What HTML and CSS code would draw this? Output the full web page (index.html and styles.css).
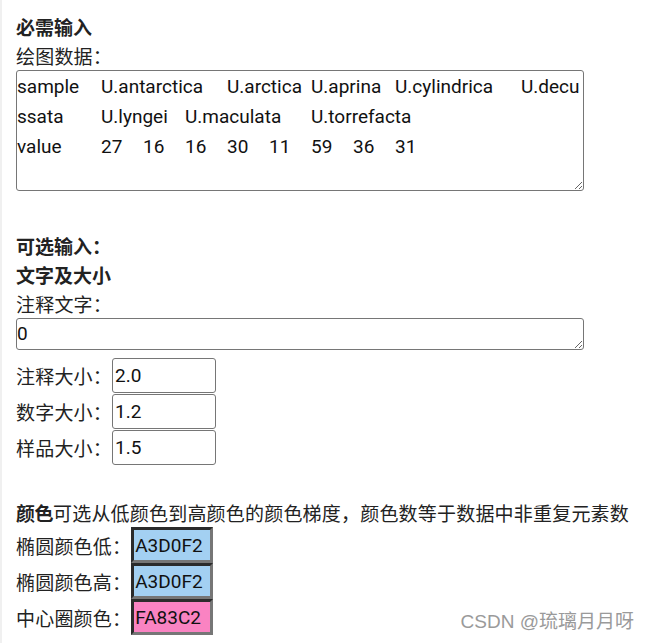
FILE: index.html
```html
<!DOCTYPE html>
<html lang="zh">
<head>
<meta charset="utf-8">
<title>绘图参数</title>
<link rel="stylesheet" href="styles.css">
</head>
<body>
<div class="page">
  <section class="block">
    <div class="title">必需输入</div>
    <div class="line">绘图数据：</div>
    <textarea class="data" spellcheck="false">sample	U.antarctica	U.arctica	U.aprina	U.cylindrica	U.decussata	U.lyngei	U.maculata	U.torrefacta
value	27	16	16	30	11	59	36	31</textarea>
  </section>

  <section class="block optional">
    <div class="title">可选输入：</div>
    <div class="title">文字及大小</div>
    <div class="line">注释文字：</div>
    <textarea class="note" spellcheck="false">0</textarea>
    <div class="rows">
      <div class="row"><span class="lab">注释大小：</span><input class="num" type="text" value="2.0"></div>
      <div class="row"><span class="lab">数字大小：</span><input class="num" type="text" value="1.2"></div>
      <div class="row"><span class="lab">样品大小：</span><input class="num" type="text" value="1.5"></div>
    </div>
  </section>

  <section class="block colors">
    <div class="line"><b class="strong">颜色</b>可选从低颜色到高颜色的颜色梯度，颜色数等于数据中非重复元素数</div>
    <div class="row crow"><span class="lab">椭圆颜色低：</span><input class="color blue" type="text" value="A3D0F2"></div>
    <div class="row crow"><span class="lab">椭圆颜色高：</span><input class="color blue" type="text" value="A3D0F2"></div>
    <div class="row crow"><span class="lab">中心圈颜色：</span><input class="color pink" type="text" value="FA83C2"></div>
  </section>

  <div class="watermark">CSDN @琉璃月月呀</div>
</div>
</body>
</html>
```

FILE: styles.css
```css
html, body {
  margin: 0;
  padding: 0;
  background: #ffffff;
}

body {
  font-family: Roboto, "Noto Sans CJK SC", sans-serif;
  font-size: 19px;
  color: #222222;
}

.page {
  position: relative;
  height: 643px;
  box-sizing: border-box;
  border-left: 2px solid #f0f0f0;
  padding: 12px 0 0 14px;
  overflow: hidden;
}

.title {
  font-family: "Noto Sans CJK SC", sans-serif;
  font-weight: 700;
  line-height: 29px;
  height: 29px;
}

.line {
  font-family: "Noto Sans CJK SC", sans-serif;
  line-height: 29px;
  height: 29px;
  white-space: nowrap;
  letter-spacing: 0.2px;
}

.strong {
  font-weight: 700;
  letter-spacing: -0.5px;
}

textarea {
  display: block;
  box-sizing: border-box;
  width: 568px;
  margin: 0;
  border: 1px solid #767676;
  border-radius: 3px;
  font-family: Roboto, "Noto Sans CJK SC", sans-serif;
  font-size: 19px;
  color: #111111;
  background: #ffffff;
  tab-size: 42px;
  -moz-tab-size: 42px;
  word-break: break-all;
  outline: none;
}

.data {
  height: 121px;
  padding: 1px 0 0 0;
  line-height: 30px;
  resize: both;
  overflow: hidden;
}

.note {
  height: 32px;
  padding: 0;
  line-height: 30px;
  overflow: hidden;
}

.optional {
  margin-top: 40px;
}

.rows {
  margin-top: 7px;
}

.row {
  display: flex;
  align-items: center;
  height: 36px;
}

.lab {
  font-family: "Noto Sans CJK SC", sans-serif;
  line-height: 29px;
  white-space: nowrap;
  letter-spacing: 0.2px;
}

input {
  box-sizing: border-box;
  margin: 0;
  font-family: Roboto, "Noto Sans CJK SC", sans-serif;
  font-size: 19px;
  color: #111111;
  outline: none;
}

.num {
  width: 104px;
  height: 35px;
  border: 1px solid #767676;
  border-radius: 3px;
  padding: 0 0 0 2px;
  background: #ffffff;
}

.colors {
  margin-top: 33px;
}

.color {
  width: 82px;
  height: 36px;
  border-style: solid;
  border-width: 3px;
  border-color: #2b2b2b #767676 #767676 #2b2b2b;
  border-radius: 0;
  padding: 0 0 0 1px;
}

.blue {
  background: #a3d0f2;
}

.pink {
  background: #fa83c2;
}

.watermark {
  position: absolute;
  right: 15px;
  bottom: 8px;
  font-family: "Liberation Sans", "Noto Sans CJK SC", sans-serif;
  font-size: 19px;
  line-height: 26px;
  color: #9a9a9a;
  text-shadow: 0 0 2px #ffffff;
  white-space: nowrap;
}
```
